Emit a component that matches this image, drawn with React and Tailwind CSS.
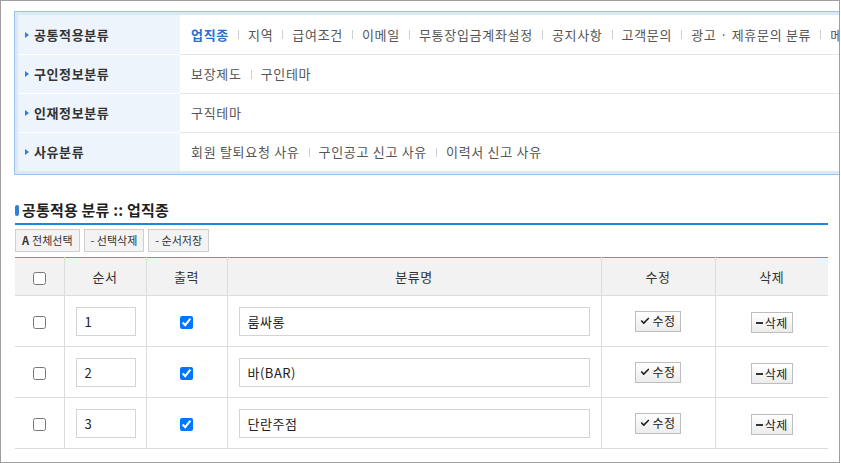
import { Check } from "lucide-react";

const MENU_ROWS = [
  {
    title: "공통적용분류",
    items: ["업직종", "지역", "급여조건", "이메일", "무통장입금계좌설정", "공지사항", "고객문의", "광고 · 제휴문의 분류", "메인설정"],
    active: 0,
  },
  { title: "구인정보분류", items: ["보장제도", "구인테마"] },
  { title: "인재정보분류", items: ["구직테마"] },
  { title: "사유분류", items: ["회원 탈퇴요청 사유", "구인공고 신고 사유", "이력서 신고 사유"] },
];

const ROWS = [
  { order: "1", name: "룸싸롱" },
  { order: "2", name: "바(BAR)" },
  { order: "3", name: "단란주점" },
];

function SmallButton({ children }) {
  return (
    <button className="h-[23px] px-[6px] border border-[#cfcfcf] bg-[#f3f3f3] text-[11px] text-[#333] flex items-center gap-[3px] leading-none">
      {children}
    </button>
  );
}

function RowButton({ children }) {
  return (
    <button className="h-[21px] px-[4px] border border-[#bdbdbd] bg-gradient-to-b from-white to-[#ececec] text-[12px] text-[#222] inline-flex items-center gap-[2px] leading-none">
      {children}
    </button>
  );
}

export default function App() {
  return (
    <div
      className="w-[840px] h-[463px] border border-[#9e9e9e] bg-white overflow-hidden pt-[10px] pl-[13px] text-[#333]"
      style={{ fontFamily: '"Noto Sans CJK KR", "Noto Sans", sans-serif' }}
    >
      {/* 분류 메뉴 */}
      <div className="w-[880px] border border-[#9dc3ef] bg-[#dbe8f8] p-[3px]">
        {MENU_ROWS.map((row, i) => (
          <div key={i} className={`flex h-[39px] ${i > 0 ? "border-t border-[#e6e6e6]" : ""}`}>
            <div className={`w-[162px] shrink-0 bg-[#eef4fb] flex items-center pl-[7px] gap-[5px] ${i > 0 ? "border-t border-white -mt-px" : ""}`}>
              <span className="w-0 h-0 border-y-[3.5px] border-y-transparent border-l-[4px] border-l-[#2f7fd8]" />
              <span className="text-[13px] font-bold text-[#333] tracking-[0.6px]">{row.title}</span>
            </div>
            <div className="flex-1 bg-white flex items-center pl-[11px] whitespace-nowrap text-[13px] text-[#555] tracking-[0.7px]">
              {row.items.map((item, j) => (
                <span key={j} className="flex items-center">
                  {j > 0 && <span className="w-px h-[9px] bg-[#cfcfcf] mx-[9px]" />}
                  <span className={row.active === j ? "text-[#2a6fcc] font-bold" : ""}>{item}</span>
                </span>
              ))}
            </div>
          </div>
        ))}
      </div>

      {/* 목록 */}
      <div className="w-[813px] mt-[26px] ml-px">
        <div className="flex items-center gap-[3px] h-[19px]">
          <span className="w-[4px] h-[11px] rounded-[2px] bg-[#2f80d8]" />
          <h2 className="text-[15px] font-bold text-[#222] tracking-[0.2px]">공통적용 분류 :: 업직종</h2>
        </div>
        <div className="h-[2px] bg-[#1b87dd] mt-[3px]" />

        <div className="flex gap-[4px] mt-[4px]">
          <SmallButton>
            <b className="text-[11px]">A</b>전체선택
          </SmallButton>
          <SmallButton>- 선택삭제</SmallButton>
          <SmallButton>- 순서저장</SmallButton>
        </div>

        <table className="w-full mt-[5px] border-collapse table-fixed text-[13px] tracking-[0.5px]">
          <colgroup>
            <col className="w-[49px]" />
            <col className="w-[82px]" />
            <col className="w-[81px]" />
            <col className="w-[374px]" />
            <col className="w-[114px]" />
            <col className="w-[113px]" />
          </colgroup>
          <thead>
            <tr className="h-[38px] bg-[#f2f2f2] border-t border-[#5a98dc] border-b border-b-[#dcdcdc]">
              <th className="font-normal">
                <input type="checkbox" className="w-[13px] h-[13px] align-middle" />
              </th>
              <th className="font-normal border-l border-[#dcdcdc]">순서</th>
              <th className="font-normal border-l border-[#dcdcdc]">출력</th>
              <th className="font-normal border-l border-[#dcdcdc]">분류명</th>
              <th className="font-normal border-l border-[#dcdcdc]">수정</th>
              <th className="font-normal border-l border-[#dcdcdc]">삭제</th>
            </tr>
          </thead>
          <tbody>
            {ROWS.map((r) => (
              <tr key={r.order} className="h-[51px] border-b border-[#dcdcdc]">
                <td className="text-center">
                  <input type="checkbox" className="w-[13px] h-[13px] align-middle" />
                </td>
                <td className="border-l border-[#dcdcdc] px-[10px] pl-[11px]">
                  <input
                    defaultValue={r.order}
                    className="w-full h-[29px] border border-[#d4d4d4] px-[8px] text-[13px] text-[#222] outline-none"
                  />
                </td>
                <td className="border-l border-[#dcdcdc] text-center">
                  <input type="checkbox" defaultChecked className="w-[13px] h-[13px] align-middle" />
                </td>
                <td className="border-l border-[#dcdcdc] px-[11px]">
                  <input
                    defaultValue={r.name}
                    className="w-full h-[29px] border border-[#d4d4d4] px-[8px] text-[13px] text-[#222] tracking-[0.5px] outline-none"
                  />
                </td>
                <td className="border-l border-[#dcdcdc] text-center">
                  <RowButton>
                    <Check size={10} strokeWidth={4} />
                    수정
                  </RowButton>
                </td>
                <td className="border-l border-[#dcdcdc] text-center">
                  <RowButton>
                    <span className="w-[7px] h-[2px] bg-[#333]" />
                    삭제
                  </RowButton>
                </td>
              </tr>
            ))}
          </tbody>
        </table>
      </div>
    </div>
  );
}
